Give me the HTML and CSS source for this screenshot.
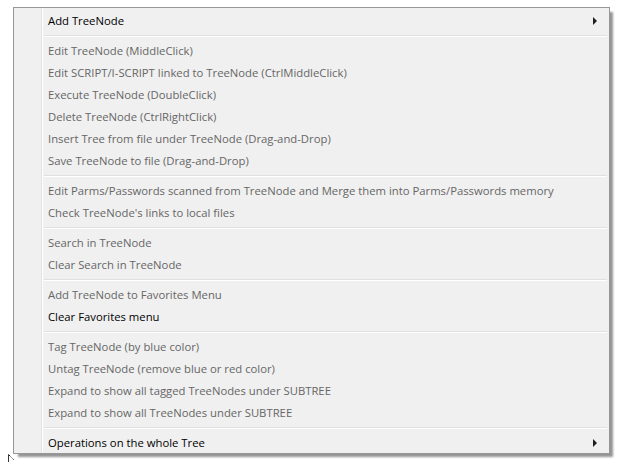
FILE: index.html
```html
<!DOCTYPE html>
<html>
<head>
<meta charset="utf-8">
<link rel="stylesheet" href="styles.css">
</head>
<body>
<div class="menu">
  <div class="item enabled sub">Add TreeNode<span class="arrow"></span></div>
  <div class="sep"></div>
  <div class="item">Edit TreeNode (MiddleClick)</div>
  <div class="item">Edit SCRIPT/I-SCRIPT linked to TreeNode (CtrlMiddleClick)</div>
  <div class="item">Execute TreeNode (DoubleClick)</div>
  <div class="item">Delete TreeNode (CtrlRightClick)</div>
  <div class="item">Insert Tree from file under TreeNode (Drag-and-Drop)</div>
  <div class="item">Save TreeNode to file (Drag-and-Drop)</div>
  <div class="sep"></div>
  <div class="item">Edit Parms/Passwords scanned from TreeNode and Merge them into Parms/Passwords memory</div>
  <div class="item">Check TreeNode's links to local files</div>
  <div class="sep"></div>
  <div class="item">Search in TreeNode</div>
  <div class="item">Clear Search in TreeNode</div>
  <div class="sep"></div>
  <div class="item">Add TreeNode to Favorites Menu</div>
  <div class="item enabled">Clear Favorites menu</div>
  <div class="sep"></div>
  <div class="item">Tag TreeNode (by blue color)</div>
  <div class="item">Untag TreeNode (remove blue or red color)</div>
  <div class="item">Expand to show all tagged TreeNodes under SUBTREE</div>
  <div class="item">Expand to show all TreeNodes under SUBTREE</div>
  <div class="sep"></div>
  <div class="item enabled sub">Operations on the whole Tree<span class="arrow"></span></div>
</div>
<svg class="cursor" width="8" height="8" viewBox="0 0 8 8"><path d="M0.5 0.5 L0.5 8 M0.5 0.5 L6 6" stroke="#333" stroke-width="1" fill="none"/><path d="M1.5 2 L1.5 8 M1.5 2 L5 5.5" stroke="#fff" stroke-width="1" fill="none"/></svg>
</body>
</html>
```
FILE: styles.css
```css
html, body {
  margin: 0;
  padding: 0;
  background: #ffffff;
}
body {
  width: 619px;
  height: 462px;
  overflow: hidden;
  position: relative;
}
.menu {
  box-sizing: border-box;
  margin: 7px 0 0 13px;
  width: 597px;
  border: 1px solid #979797;
  padding: 1px 0 0 0;
  background-color: #f0f0f0;
  background-image: linear-gradient(to right, transparent 27px, #e2e3e3 27px, #e2e3e3 28px, #ffffff 28px, #ffffff 29px, transparent 29px);
  box-shadow: 4px 4px 2px -1px rgba(0, 0, 0, 0.42);
  font-family: "Open Sans", "Noto Sans", sans-serif;
  font-size: 11.3px;
  color: #666666;
}
.item {
  box-sizing: border-box;
  height: 22px;
  line-height: 20px;
  padding-top: 2px;
  padding-left: 34px;
  display: flex;
  align-items: center;
  white-space: nowrap;
}
.item.enabled {
  color: #000000;
}
.sub {
  justify-content: space-between;
  padding-right: 12px;
}
.arrow {
  width: 0;
  height: 0;
  margin-top: -1px;
  border-top: 4px solid transparent;
  border-bottom: 4px solid transparent;
  border-left: 4px solid #1e1e1e;
}
.sep {
  height: 1px;
  margin: 4px 2px 2px 30px;
  background: #e0e0e0;
  border-bottom: 1px solid #ffffff;
}
.cursor {
  position: absolute;
  left: 8px;
  top: 454px;
}
```
